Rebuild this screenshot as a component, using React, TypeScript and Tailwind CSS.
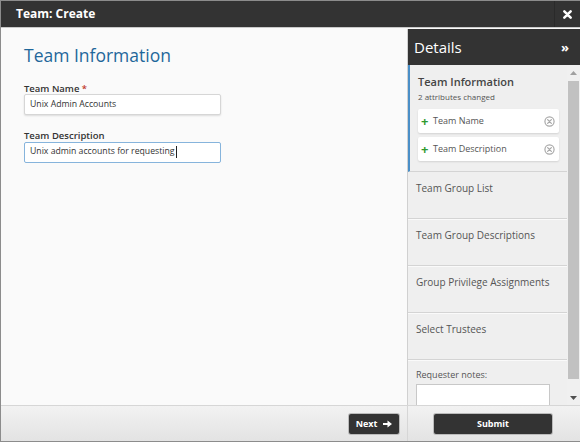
const font = { fontFamily: '"Open Sans", "Liberation Sans", sans-serif' }

function CircleX() {
  return (
    <svg width="11" height="11" viewBox="0 0 12 12" className="shrink-0">
      <circle cx="6" cy="6" r="5" fill="none" stroke="#a8a8a8" strokeWidth="1.3" />
      <path d="M4 4 L8 8 M8 4 L4 8" stroke="#a8a8a8" strokeWidth="1.4" strokeLinecap="round" />
    </svg>
  )
}

function ChangeCard({ label }: { label: string }) {
  return (
    <div className="flex h-6 items-center rounded-[2px] bg-white pl-[3px] pr-[4px] shadow-[0_1px_2px_rgba(0,0,0,0.12)]">
      <span className="w-[9px] text-[13px] leading-none font-bold text-[#2f9a2f]">+</span>
      <span className="ml-[3px] flex-1 text-[9px] text-[#555]">{label}</span>
      <CircleX />
    </div>
  )
}

function Section({ label }: { label: string }) {
  return (
    <div className="h-[47px] border-b border-[#d4d4d4] px-2 pt-[9px] text-[10px] text-[#555] shadow-[0_1px_0_#fafafa]">
      {label}
    </div>
  )
}

export default function App() {
  return (
    <div
      className="flex h-[442px] w-[580px] flex-col overflow-hidden border-t border-b border-l border-[#8c8c8c] bg-[#fafafa]"
      style={font}
    >
      {/* title bar */}
      <div className="flex h-[27px] shrink-0 items-center border-b border-[#c9c9c9] bg-[#333]">
        <span className="ml-[15px] flex-1 text-[12px] font-bold text-white">Team: Create</span>
        <div className="flex h-full w-[26px] items-center justify-center border-l border-[#2a2a2a]">
          <svg width="9" height="9" viewBox="0 0 10 10">
            <path d="M1.5 1.5 L8.5 8.5 M8.5 1.5 L1.5 8.5" stroke="white" strokeWidth="2.8" strokeLinecap="round" />
          </svg>
        </div>
      </div>

      {/* body */}
      <div className="flex min-h-0 flex-1">
        <div className="flex-1 px-[23px] pt-[19px]">
          <h1 className="text-[17.5px] leading-none text-[#1f679a]">Team Information</h1>

          <label className="mt-[19px] block text-[9.5px] leading-none font-semibold text-[#333]">
            Team Name <span className="text-[#c0392b]">*</span>
          </label>
          <div className="mt-px flex h-[21px] w-[197px] items-center rounded-[2px] border border-[#d6d6d6] bg-white px-[5px] text-[8.7px] text-[#333] shadow-[0_1px_2px_rgba(0,0,0,0.12)]">
            Unix Admin Accounts
          </div>

          <label className="mt-[16px] block text-[9.5px] leading-none font-semibold text-[#333]">
            Team Description
          </label>
          <div className="mt-px flex h-[21px] w-[197px] items-center rounded-[2px] border border-[#86b4dc] bg-white px-[5px] text-[8.7px] text-[#333]">
            Unix admin accounts for requesting
            <span className="ml-px h-[12px] w-px bg-[#222]" />
          </div>
        </div>

        {/* details panel */}
        <div className="mt-px flex w-[173px] shrink-0 flex-col border-l border-[#d0d0d0] bg-[#efefef]">
          <div className="flex h-[36px] shrink-0 items-center bg-[#333] pr-[11px] pl-[6px]">
            <span className="flex-1 text-[15px] text-white">Details</span>
            <span className="text-[13px] leading-none font-bold text-white">»</span>
          </div>
          <div className="flex min-h-0 flex-1">
            <div className="min-w-0 flex-1 overflow-hidden">
              <div className="h-[107px] border-b border-l-2 border-[#d4d4d4] border-l-[#4a8fc7] px-[8px] pt-[11px]">
                <div className="text-[11px] leading-none font-semibold text-[#444]">Team Information</div>
                <div className="mt-[6px] text-[8px] leading-none text-[#555]">2 attributes changed</div>
                <div className="mt-[8px] flex flex-col gap-[4px]">
                  <ChangeCard label="Team Name" />
                  <ChangeCard label="Team Description" />
                </div>
              </div>
              <Section label="Team Group List" />
              <Section label="Team Group Descriptions" />
              <Section label="Group Privilege Assignments" />
              <Section label="Select Trustees" />
              <div className="px-[8px] pt-[8px]">
                <div className="text-[9px] text-[#555]">Requester notes:</div>
                <div className="mt-[2px] h-[30px] w-[134px] border border-[#c8c8c8] bg-white" />
              </div>
            </div>
            {/* scrollbar */}
            <div className="flex w-[13px] shrink-0 flex-col bg-[#f0f0f0]">
              <div className="flex h-[16px] items-center justify-center">
                <svg width="7" height="4" viewBox="0 0 7 4"><path d="M0 4 L3.5 0 L7 4 Z" fill="#a0a0a0" /></svg>
              </div>
              <div className="mx-[1px] h-[298px] bg-[#c1c1c1]" />
              <div className="flex flex-1 items-end justify-center pb-[5px]">
                <svg width="7" height="4" viewBox="0 0 7 4"><path d="M0 0 L7 0 L3.5 4 Z" fill="#505050" /></svg>
              </div>
            </div>
          </div>
        </div>
      </div>

      {/* footer */}
      <div className="flex h-[36px] shrink-0 border-t border-[#d6d6d6] bg-gradient-to-b from-[#f2f2f2] to-[#e3e3e3]">
        <div className="flex flex-1 items-center justify-end pr-[8px]">
          <button className="flex h-[20px] w-[50px] items-center justify-center gap-[6px] rounded-[2px] bg-[#333] text-[9px] font-bold text-white shadow-[0_0_0_1px_#bbb]">
            Next
            <svg width="9" height="8" viewBox="0 0 9 8">
              <path d="M0 3 H4.5 V0.5 L9 4 L4.5 7.5 V5 H0 Z" fill="white" />
            </svg>
          </button>
        </div>
        <div className="flex w-[173px] shrink-0 items-center border-l border-[#d6d6d6] pl-[26px]">
          <button className="h-[20px] w-[118px] rounded-[2px] bg-[#333] text-[9px] font-bold text-white shadow-[0_0_0_1px_#bbb]">
            Submit
          </button>
        </div>
      </div>
    </div>
  )
}
